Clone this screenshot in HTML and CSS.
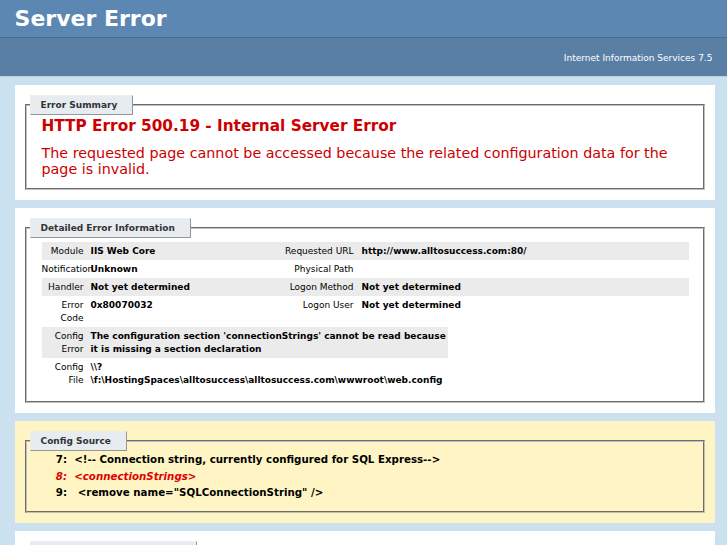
FILE: index.html
```html
<!DOCTYPE html>
<html lang="en">
<head>
<meta charset="utf-8">
<title>IIS 7.5 Detailed Error - 500.19 - Internal Server Error</title>
<link rel="stylesheet" href="styles.css">
</head>
<body>
<div class="header"><h1>Server Error</h1></div>
<div class="server-version"><p>Internet Information Services 7.5</p></div>
<div class="content">
  <div class="box">
    <fieldset class="group summary">
      <legend>Error Summary</legend>
      <h2>HTTP Error 500.19 - Internal Server Error</h2>
      <h3>The requested page cannot be accessed because the related configuration data for the page is invalid.</h3>
    </fieldset>
  </div>

  <div class="box">
    <fieldset class="group details">
      <legend>Detailed Error Information</legend>
      <table class="info">
        <colgroup><col class="c-label"><col class="c-value"><col class="c-label2"><col class="c-value2"></colgroup>
        <tr class="alt"><th>Module</th><td>IIS Web Core</td><th>Requested URL</th><td>http://www.alltosuccess.com:80/</td></tr>
        <tr><th>Notification</th><td>Unknown</td><th>Physical Path</th><td></td></tr>
        <tr class="alt"><th>Handler</th><td>Not yet determined</td><th>Logon Method</th><td>Not yet determined</td></tr>
        <tr><th>Error Code</th><td>0x80070032</td><th>Logon User</th><td>Not yet determined</td></tr>
      </table>
      <table class="info narrow">
        <colgroup><col class="c-label"><col></colgroup>
        <tr class="alt"><th>Config Error</th><td>The configuration section 'connectionStrings' cannot be read because it is missing a section declaration</td></tr>
        <tr><th>Config File</th><td>\\?<wbr>\f:\HostingSpaces\alltosuccess\alltosuccess.com\wwwroot\web.config</td></tr>
      </table>
    </fieldset>
  </div>

  <div class="box config-source">
    <fieldset class="group source">
      <legend>Config Source</legend>
<pre class="code"><code>    7:  &lt;!-- Connection string, currently configured for SQL Express--&gt;
<span class="hl">    8:  &lt;connectionStrings&gt;</span>
    9:   &lt;remove name="SQLConnectionString" /&gt;</code></pre>
    </fieldset>
  </div>

  <div class="box">
    <fieldset class="group links">
      <legend>Links and More Information</legend>
      <p>This error occurs when there is a problem reading the configuration file for the Web server or Web application. In some cases, the event logs may contain more information about what caused this error.</p>
      <p><a href="#">View more information &raquo;</a></p>
    </fieldset>
  </div>
</div>
</body>
</html>
```

FILE: styles.css
```css
body {
  margin: 0;
  font-family: "DejaVu Sans", Verdana, sans-serif;
  font-size: 9px;
  background: #cbe1ef;
  color: #000;
}

.header {
  padding: 6px 2%;
  background: #5c87b2;
  color: #fff;
}

.header h1 {
  margin: 0;
  font-size: 22px;
  font-weight: bold;
  color: #fff;
}

.server-version {
  padding: 10px 2% 8px;
  background: #5a7fa5;
  border-top: 1px solid #4a6c8e;
  border-bottom: 1px solid #c1cfdd;
  color: #fff;
  text-align: right;
}

.server-version p {
  margin: 5px 0;
}

.content {
  margin-left: 2%;
}

.box {
  width: 95.5%;
  margin-top: 8px;
  padding: 10px;
  background: #fff;
}

.config-source {
  background: #fff5c4;
}

.group {
  margin: 0;
  padding: 0 15px 10px;
  border: 2px groove #c0c0c0;
  min-width: 0;
}

.group legend {
  margin-left: -12px;
  padding: 4px 15px 4px 10px;
  background: #e7ecf0;
  border-top: 1px solid #ededed;
  border-left: 1px solid #ededed;
  border-right: 1px solid #969696;
  border-bottom: 1px solid #969696;
  color: #333;
  font-weight: bold;
  font-size: 9px;
}

.summary {
  padding-bottom: 11px;
}

.summary h2 {
  margin: 2px 0 0;
  font-size: 15.3px;
  color: #cc0000;
}

.summary h3 {
  margin: 10px 0 0;
  font-size: 14.3px;
  line-height: 16px;
  font-weight: normal;
  color: #cc0000;
}

.info {
  width: 647px;
  table-layout: fixed;
  border-collapse: collapse;
  margin-top: 4px;
}

.info.narrow {
  width: 406px;
  margin-top: 0;
  margin-bottom: 2px;
}

.c-label { width: 49px; }
.c-value { width: 171px; }
.c-label2 { width: 100px; }

.info th,
.info td {
  padding: 3px 0 2px;
  line-height: 13px;
  vertical-align: top;
  text-align: left;
}

.info th {
  font-weight: normal;
  text-align: right;
  padding-right: 7px;
}

.info th:nth-child(3) {
  padding-right: 8px;
}

.info td {
  font-weight: bold;
}

.info tr.alt th,
.info tr.alt td {
  background: #ebebeb;
}

.code {
  margin: 0;
  font-family: inherit;
  font-size: 10.25px;
  line-height: 16.5px;
}

.code code {
  font-family: inherit;
  font-weight: bold;
  color: #000;
}

.code .hl {
  color: #e00000;
  font-style: italic;
}

.links p {
  margin: 0 0 10px;
  font-size: 9px;
}

.links a {
  color: #007eff;
  font-weight: bold;
}
```
